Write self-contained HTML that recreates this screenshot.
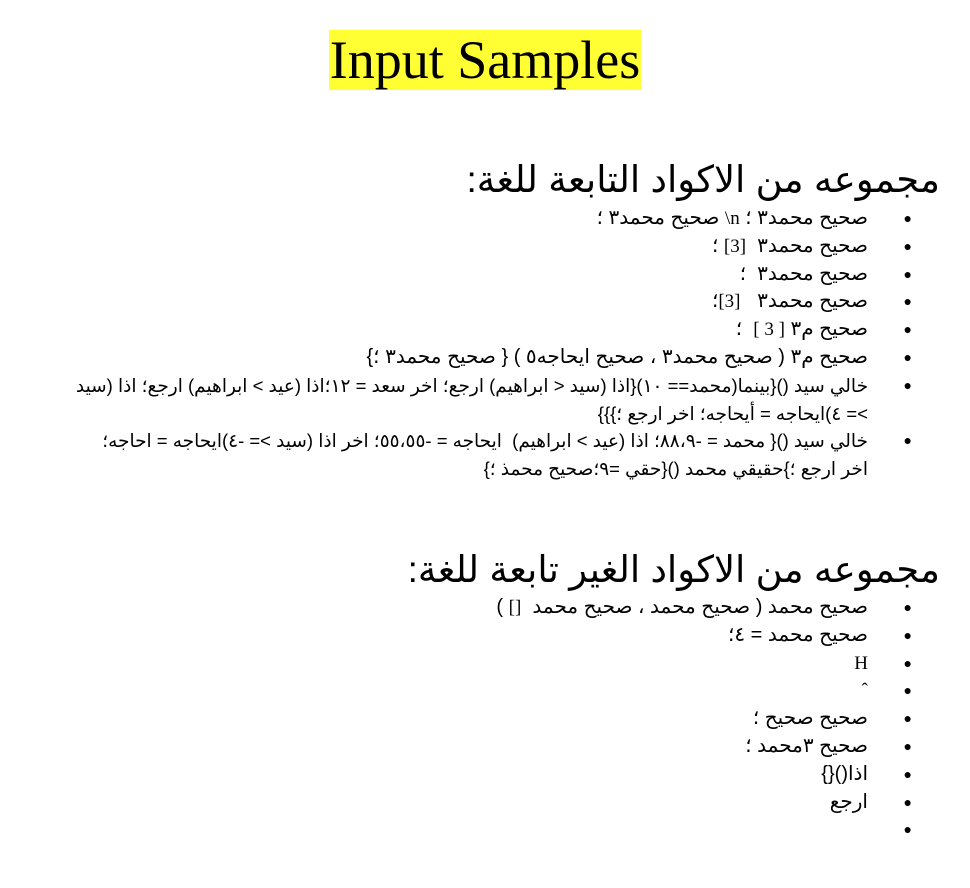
<!DOCTYPE html>
<html><head><meta charset="utf-8">
<style>
html,body{margin:0;padding:0;background:#fff;}
body{width:970px;height:888px;position:relative;font-family:"Liberation Sans","DejaVu Sans",sans-serif;color:#000;overflow:hidden;}
.title{position:absolute;top:30px;left:0;width:970px;text-align:center;}
.title span{background:#ffff33;font-family:"Liberation Serif",serif;font-size:54px;line-height:60px;display:inline-block;padding:0 1px;}
h2{position:absolute;right:30px;margin:0;font-weight:normal;font-size:37px;line-height:40px;direction:rtl;white-space:nowrap;}
ul{position:absolute;right:102px;margin:0;padding:0;list-style:none;direction:rtl;width:800px;}
li{position:relative;font-size:20px;line-height:27.8px;white-space:nowrap;}
li::before{content:"●";position:absolute;right:-44px;font-size:14px;}
.s{font-family:"Liberation Serif",serif;font-size:19px;}
.n{font-size:18.5px;}
</style></head><body>
<div class="title"><span>Input Samples</span></div>
<h2 style="top:160px">مجموعه من الاكواد التابعة للغة:</h2>
<ul style="top:205px">
<li>صحيح محمد٣ ؛ <span class="s">n\</span> صحيح محمد٣ ؛</li>
<li>صحيح محمد٣ &nbsp;<span class="s">[3]</span> ؛</li>
<li>صحيح محمد٣ &nbsp;؛</li>
<li>صحيح محمد٣ &nbsp; <span class="s">[3]</span>؛</li>
<li>صحيح م٣ <span class="s">[ 3 ]</span> &nbsp;؛</li>
<li>صحيح م٣ ( صحيح محمد٣ ، صحيح ايحاجه٥ ) { صحيح محمد٣ ؛}</li>
<li class="n">خالي سيد (){بينما(محمد== ١٠){اذا (سيد &lt; ابراهيم) ارجع؛ اخر سعد = ١٢؛اذا (عيد &gt; ابراهيم) ارجع؛ اذا (سيد<br>&gt;= ٤)ايحاجه = أيحاجه؛ اخر ارجع ؛}}}</li>
<li class="n">خالي سيد (){ محمد = -٨٨،٩؛ اذا (عيد &gt; ابراهيم) &nbsp;ايحاجه = -٥٥،٥٥؛ اخر اذا (سيد &gt;= -٤)ايحاجه = احاجه؛<br>اخر ارجع ؛}حقيقي محمد (){حقي =٩؛صحيح محمذ ؛}</li>
</ul>
<h2 style="top:550px">مجموعه من الاكواد الغير تابعة للغة:</h2>
<ul style="top:594px">
<li>صحيح محمد ( صحيح محمد ، صحيح محمد &nbsp;<span class="s">[]</span> )</li>
<li>صحيح محمد = ٤؛</li>
<li><span class="s">H</span></li>
<li><span class="s">ˆ</span></li>
<li>صحيح صحيح ؛</li>
<li>صحيح ٣محمد ؛</li>
<li>اذا(){}</li>
<li>ارجع</li>
<li>&nbsp;</li>
</ul>
</body></html>
